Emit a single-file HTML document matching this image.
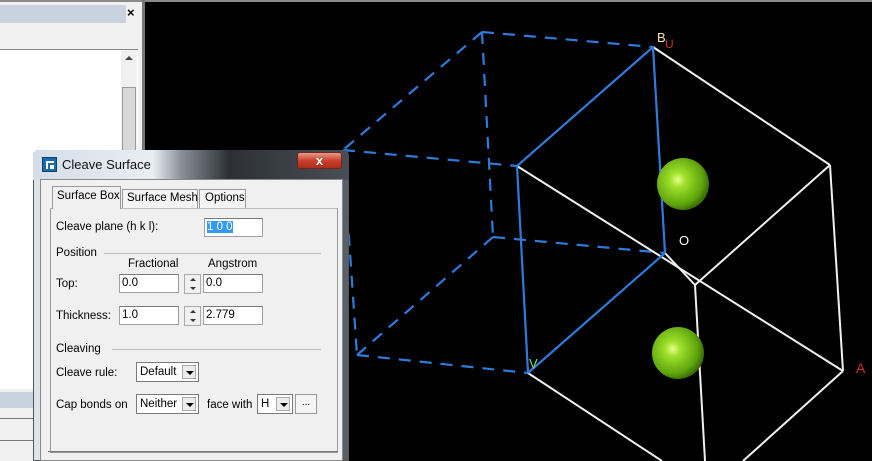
<!DOCTYPE html>
<html><head><meta charset="utf-8"><style>
*{margin:0;padding:0;box-sizing:border-box}
body{width:872px;height:461px;overflow:hidden;background:#000;position:relative;font-family:"Liberation Sans",sans-serif;font-size:11.5px;color:#000;white-space:nowrap}
.a{position:absolute}
.inp{position:absolute;background:#fff;border:1px solid #a0a0a0;border-top-color:#7a7a7a;height:19px;font-size:11.5px;padding:1px 2px;line-height:15px}
.cb{position:absolute;background:#fff;border:1px solid #7a7a7a;height:20px;font-size:11.5px;padding:1px 3px;line-height:16px}
.dd{position:absolute;top:2px;right:2px;width:14px;height:14px;background:#ececec;border:1px solid #aaa}
.dd:after{content:"";position:absolute;left:3px;top:5px;border-left:4px solid transparent;border-right:4px solid transparent;border-top:4px solid #000}
.spin{position:absolute;width:17px;height:20px;border:1px solid #aaa;background:#f0f0f0}
.spin:before{content:"";position:absolute;left:5px;top:3px;border-left:3px solid transparent;border-right:3px solid transparent;border-bottom:3px solid #333}
.spin:after{content:"";position:absolute;left:5px;top:12px;border-left:3px solid transparent;border-right:3px solid transparent;border-top:3px solid #333}
</style></head><body>
<div class="a" style="left:0;top:0;width:145px;height:461px;background:#f0f0f0"></div>
<div class="a" style="left:0;top:0;width:872px;height:2px;background:#8a8a8a"></div>
<div class="a" style="left:0;top:5px;width:126px;height:18px;background:#c9d3e0"></div>
<div class="a" style="left:127px;top:5px;font-size:13px;font-weight:bold">×</div>
<div class="a" style="left:0;top:49px;width:138px;height:340px;background:#fff;border-top:1px solid #888"></div>
<div class="a" style="left:121px;top:50px;width:16px;height:340px;background:#f0f0f0"></div>
<div class="a" style="left:125px;top:56px;border-left:4px solid transparent;border-right:4px solid transparent;border-bottom:4px solid #444"></div>
<div class="a" style="left:122px;top:87px;width:14px;height:170px;background:#d8d8d8;border:1px solid #999"></div>
<div class="a" style="left:0;top:392px;width:36px;height:16px;background:#c9d3e0"></div>
<div class="a" style="left:0;top:418px;width:36px;height:1px;background:#777"></div>
<div class="a" style="left:0;top:440px;width:36px;height:1px;background:#777"></div>
<div class="a" style="left:142px;top:0;width:3px;height:461px;background:#777"></div>

<svg class="a" style="left:0;top:0" width="872" height="461" viewBox="0 0 872 461">
<defs><radialGradient id="g" cx="0.4" cy="0.42" r="0.6"><stop offset="0" stop-color="#e8ff8a"/><stop offset="0.25" stop-color="#9ee02a"/><stop offset="0.8" stop-color="#5da40c"/><stop offset="1" stop-color="#3c6e05"/></radialGradient></defs>
<g stroke="#2f7bdc" stroke-width="2.2" fill="none" stroke-dasharray="12,9">
<line x1="482" y1="32" x2="653" y2="47"/>
<line x1="482" y1="32" x2="343" y2="150"/>
<line x1="482" y1="32" x2="493" y2="237"/>
<line x1="343" y1="150" x2="517" y2="166"/>
<line x1="343" y1="150" x2="357" y2="355"/>
<line x1="357" y1="355" x2="528" y2="373"/>
<line x1="357" y1="355" x2="493" y2="237"/>
<line x1="493" y1="237" x2="665" y2="253"/>
</g>
<g stroke="#f0f0f0" stroke-width="2" fill="none">
<line x1="653" y1="47" x2="830" y2="165"/>
<line x1="830" y1="165" x2="695" y2="285"/>
<line x1="830" y1="165" x2="843" y2="371"/>
<line x1="517" y1="166" x2="843" y2="371"/>
<line x1="665" y1="253" x2="695" y2="285"/>
<line x1="695" y1="285" x2="705" y2="461"/>
<line x1="843" y1="371" x2="743" y2="461"/>
<line x1="528" y1="373" x2="662" y2="461"/>
</g>
<g stroke="#2f7bdc" stroke-width="2.2" fill="none">
<line x1="653" y1="47" x2="517" y2="166"/>
<line x1="653" y1="47" x2="665" y2="253"/>
<line x1="517" y1="166" x2="528" y2="373"/>
<line x1="528" y1="373" x2="665" y2="253"/>
</g>
<circle cx="683" cy="184" r="26" fill="url(#g)"/>
<circle cx="678" cy="353" r="26" fill="url(#g)"/>
<text x="657" y="42" fill="#f4e6b0" font-family="Liberation Sans" font-size="13">B</text>
<text x="665" y="48" fill="#d03020" font-family="Liberation Sans" font-size="12">U</text>
<text x="679" y="245" fill="#fff" font-family="Liberation Sans" font-size="13">O</text>
<text x="529" y="368" fill="#7fe070" font-family="Liberation Sans" font-size="13">V</text>
<text x="856" y="373" fill="#d03020" font-family="Liberation Sans" font-size="14">A</text>
</svg>

<div class="a" style="left:33px;top:150px;width:316px;height:311px;border:1px solid #555;border-radius:6px 6px 0 0;background:linear-gradient(90deg,#dbe3ec 0%,#e6ecf2 35%,#6a7078 48%,#3a3f46 60%,#5a6068 100%)"></div>
<div class="a" style="left:33px;top:150px;width:316px;height:30px;border-radius:6px 6px 0 0;background:linear-gradient(90deg,#d4dde8 0%,#e9eef3 38%,#8a9098 47%,#2c3036 62%,#4a4f56 100%)"></div>
<div class="a" style="left:42px;top:157px;width:15px;height:15px;background:#1e6aa8;border:1px solid #0d3f6e"><div class="a" style="left:3px;top:3px;width:8px;height:8px;border:2px solid #fff;border-right:none;border-bottom:none"></div><div class="a" style="left:7px;top:7px;width:4px;height:4px;background:#fff"></div></div>
<div class="a" style="left:62px;top:157px;font-size:13px;color:#111">Cleave Surface</div>
<div class="a" style="left:297px;top:152px;width:45px;height:17px;border-radius:3px;background:linear-gradient(#e89a88,#c8422e 50%,#b22a18);border:1px solid #6a2a20;color:#fff;font-weight:bold;text-align:center;font-size:13px;line-height:15px">x</div>
<div class="a" style="left:40px;top:179px;width:303px;height:282px;background:#f0f0f0;border:1px solid #888"></div>
<div class="a" style="left:50px;top:208px;width:288px;height:245px;border:1px solid #999;border-top-color:#bbb;background:#f0f0f0"></div>
<div class="a" style="left:52px;top:186px;width:69px;height:23px;background:#f0f0f0;border:1px solid #999;border-bottom:none;padding:3px 0 0 4px">Surface Box</div>
<div class="a" style="left:122px;top:189px;width:76px;height:19px;border:1px solid #999;border-bottom:none;padding:2px 0 0 4px;background:#f4f4f4">Surface Mesh</div>
<div class="a" style="left:199px;top:189px;width:47px;height:19px;border:1px solid #999;border-bottom:none;padding:2px 0 0 5px;background:#f4f4f4">Options</div>

<div class="a" style="left:56px;top:221px">Cleave plane (h k l):</div>
<div class="inp" style="left:204px;top:218px;width:59px"><span style="background:#3399ff;color:#fff">1 0 0</span></div>
<div class="a" style="left:56px;top:247px">Position</div>
<div class="a" style="left:104px;top:253px;width:217px;height:1px;background:#bbb"></div>
<div class="a" style="left:128px;top:258px">Fractional</div>
<div class="a" style="left:208px;top:258px">Angstrom</div>
<div class="a" style="left:56px;top:278px">Top:</div>
<div class="inp" style="left:119px;top:274px;width:60px">0.0</div>
<div class="spin" style="left:184px;top:274px"></div>
<div class="inp" style="left:203px;top:274px;width:60px">0.0</div>
<div class="a" style="left:56px;top:310px">Thickness:</div>
<div class="inp" style="left:119px;top:306px;width:60px">1.0</div>
<div class="spin" style="left:184px;top:306px"></div>
<div class="inp" style="left:203px;top:306px;width:60px">2.779</div>
<div class="a" style="left:56px;top:343px">Cleaving</div>
<div class="a" style="left:112px;top:349px;width:209px;height:1px;background:#bbb"></div>
<div class="a" style="left:56px;top:367px">Cleave rule:</div>
<div class="cb" style="left:136px;top:362px;width:63px">Default<div class="dd"></div></div>
<div class="a" style="left:56px;top:399px">Cap bonds on</div>
<div class="cb" style="left:136px;top:394px;width:63px">Neither<div class="dd"></div></div>
<div class="a" style="left:207px;top:399px">face with</div>
<div class="cb" style="left:257px;top:394px;width:36px">H<div class="dd"></div></div>
<div class="a" style="left:295px;top:394px;width:22px;height:20px;border:1px solid #999;background:#f4f4f4;text-align:center;font-size:10px;line-height:16px">...</div>
<div class="a" style="left:48px;top:451px;width:290px;height:1px;background:#777"></div>
</body></html>
